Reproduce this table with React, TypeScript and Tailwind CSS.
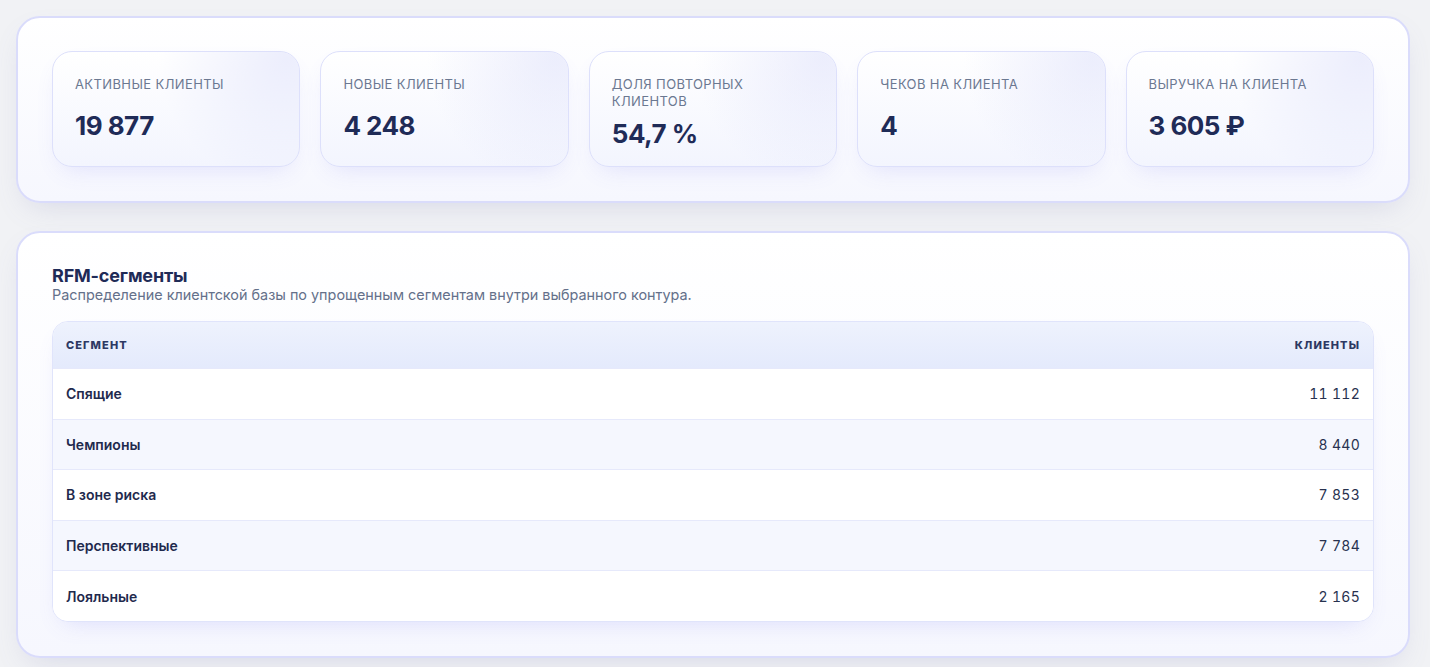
import React from 'react';

const METRICS = [
  { label: 'Активные клиенты', value: '19 877', gap: 'mt-[18px]' },
  { label: 'Новые клиенты', value: '4 248', gap: 'mt-[18px]' },
  { label: 'Доля повторных клиентов', value: '54,7 %', gap: 'mt-[9px]' },
  { label: 'Чеков на клиента', value: '4', gap: 'mt-[18px]' },
  { label: 'Выручка на клиента', value: '3 605 ₽', gap: 'mt-[18px]' },
];

const SEGMENTS = [
  { name: 'Спящие', clients: '11 112' },
  { name: 'Чемпионы', clients: '8 440' },
  { name: 'В зоне риска', clients: '7 853' },
  { name: 'Перспективные', clients: '7 784' },
  { name: 'Лояльные', clients: '2 165' },
];

const MetricCard = ({ label, value, gap }: { label: string; value: string; gap: string }) => (
  <div className="relative overflow-hidden rounded-[20px] border-[1.5px] border-[#dde0fb] bg-gradient-to-b from-white to-[#f3f5fe] px-[22px] pt-[24px] h-[116px] shadow-[0_10px_24px_-10px_rgba(99,102,241,0.18)]">
    <div className="pointer-events-none absolute inset-0 bg-[radial-gradient(circle_at_95%_5%,rgba(218,221,250,0.5),rgba(255,255,255,0)_50%)]" />
    <div className="relative">
      <p className="text-[13px] leading-[17px] uppercase tracking-[0.03em] text-[#6b7891] max-w-[170px]">{label}</p>
      <p className={`${gap} text-[26px] leading-[30px] font-bold tracking-[-0.02em] text-[#1f2b57]`}>{value}</p>
    </div>
  </div>
);

export default function App() {
  return (
    <div
      className="min-h-screen bg-[#f1f2f5] pl-4 pr-5 py-4 flex flex-col gap-[28px]"
      style={{ fontFamily: 'Inter, "Noto Sans", sans-serif' }}
    >
      <section className="rounded-[24px] border-2 border-[#dadcfb] bg-gradient-to-b from-white to-[#f6f7fe] px-[34px] pt-[33px] pb-[34px] shadow-[0_12px_30px_-12px_rgba(120,125,180,0.25)]">
        <div className="grid grid-cols-5 gap-[20px]">
          {METRICS.map((m) => (
            <MetricCard key={m.label} label={m.label} value={m.value} gap={m.gap} />
          ))}
        </div>
      </section>

      <section className="rounded-[24px] border-2 border-[#dadcfb] bg-gradient-to-b from-white to-[#f6f7fe] px-[34px] pt-[33px] pb-[34px] shadow-[0_12px_30px_-12px_rgba(120,125,180,0.25)]">
        <h2 className="text-[18px] leading-[20px] font-bold tracking-[-0.01em] text-[#1f2b57]">RFM-сегменты</h2>
        <p className="text-[14.4px] leading-[18px] text-[#64708a]">
          Распределение клиентской базы по упрощенным сегментам внутри выбранного контура.
        </p>

        <div className="mt-[17px] rounded-[16px] border border-[#e0e4fb] overflow-hidden bg-white shadow-[0_10px_24px_-12px_rgba(99,102,241,0.22)]">
          <div className="flex items-center justify-between h-[46px] px-[13px] bg-gradient-to-b from-[#eef2fd] to-[#e4eafc] text-[11px] font-extrabold uppercase tracking-[0.1em] text-[#2d3863]">
            <span>Сегмент</span>
            <span>Клиенты</span>
          </div>
          {SEGMENTS.map((s, i) => (
            <div
              key={s.name}
              className={`flex items-center justify-between h-[50.6px] px-[13px] text-[14px] border-t border-[#e6e9fb] ${
                i % 2 === 1 ? 'bg-[#f5f7fe]' : 'bg-white'
              }`}
            >
              <span className="font-semibold text-[#1f2a4d]">{s.name}</span>
              <span className="tabular-nums text-[#28324f] tracking-[0.02em]">{s.clients}</span>
            </div>
          ))}
        </div>
      </section>
    </div>
  );
}
